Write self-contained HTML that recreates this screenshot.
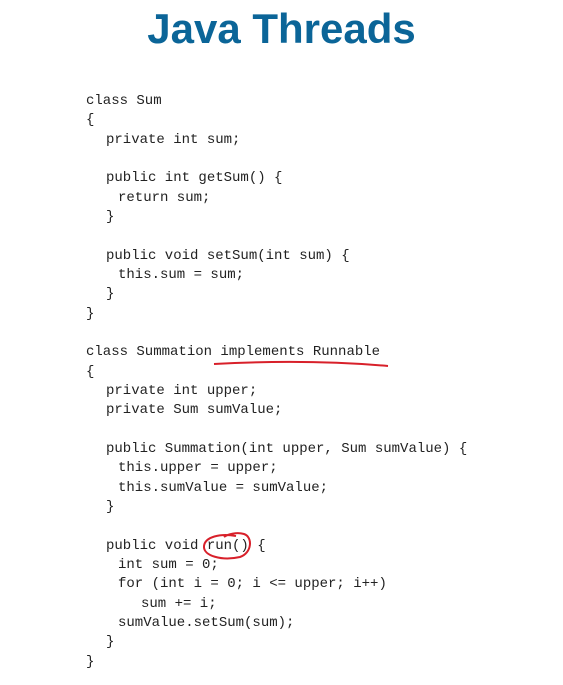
<!DOCTYPE html>
<html><head><style>
body{margin:0;width:563px;height:685px;background:#fff;position:relative;overflow:hidden}
h1{position:absolute;top:5px;left:0;width:563px;text-align:center;margin:0;font:bold 42px "Liberation Sans",sans-serif;color:#0b6598}
.c{position:absolute;left:86px;top:92px;font:14px/19.34px "Liberation Mono",monospace;color:#222}
.c div{white-space:pre;height:19.34px}
</style></head><body>
<h1>Java Threads</h1>
<div class="c">
<div>class Sum</div>
<div>{</div>
<div style="padding-left:20px">private int sum;</div>
<div></div>
<div style="padding-left:20px">public int getSum() {</div>
<div style="padding-left:32px">return sum;</div>
<div style="padding-left:20px">}</div>
<div></div>
<div style="padding-left:20px">public void setSum(int sum) {</div>
<div style="padding-left:32px">this.sum = sum;</div>
<div style="padding-left:20px">}</div>
<div>}</div>
<div></div>
<div>class Summation implements Runnable</div>
<div>{</div>
<div style="padding-left:20px">private int upper;</div>
<div style="padding-left:20px">private Sum sumValue;</div>
<div></div>
<div style="padding-left:20px">public Summation(int upper, Sum sumValue) {</div>
<div style="padding-left:32px">this.upper = upper;</div>
<div style="padding-left:32px">this.sumValue = sumValue;</div>
<div style="padding-left:20px">}</div>
<div></div>
<div style="padding-left:20px">public void run() {</div>
<div style="padding-left:32px">int sum = 0;</div>
<div style="padding-left:32px">for (int i = 0; i &lt;= upper; i++)</div>
<div style="padding-left:55px">sum += i;</div>
<div style="padding-left:32px">sumValue.setSum(sum);</div>
<div style="padding-left:20px">}</div>
<div>}</div>
</div>
<svg width="563" height="685" style="position:absolute;left:0;top:0">
<path d="M214 364 C270 361 330 361 388 366" stroke="#d8202a" stroke-width="2" fill="none"/>
<path d="M236 536 C220 533 205 537 204 546 C203 556 222 561 240 557 C252 553 253 537 244 534 C237 532 228 534 224 537" stroke="#d8202a" stroke-width="2" fill="none"/>
</svg>
</body></html>
